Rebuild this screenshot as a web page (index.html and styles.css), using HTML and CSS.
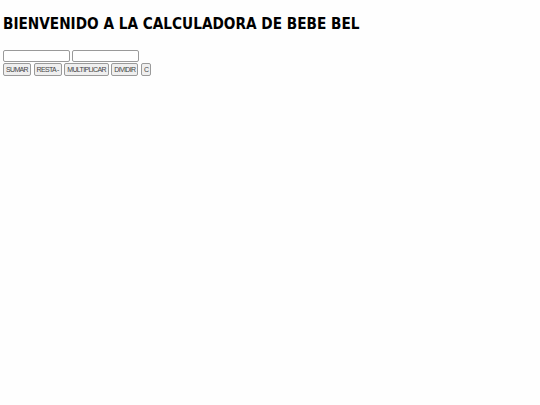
FILE: index.html
```html
<!DOCTYPE html>
<html lang="es">
<head>
<meta charset="utf-8">
<title>Calculadora</title>
<link rel="stylesheet" href="styles.css">
</head>
<body>
<h1 class="title">BIENVENIDO A LA CALCULADORA DE BEBE BEL</h1>
<div class="inputs">
  <input class="field" type="text">
  <input class="field" type="text">
</div>
<div class="buttons">
  <button class="btn">SUMAR</button>
  <button class="btn">RESTA -</button>
  <button class="btn">MULTIPLICAR</button>
  <button class="btn">DIVIDIR</button>
  <button class="btn">C</button>
</div>
</body>
</html>
```
FILE: styles.css
```css
html, body {
  background: #fefefe;
}
body {
  margin: 0;
  padding: 3px;
  font-family: "Liberation Sans", Arial, sans-serif;
}
.title {
  margin: 11.5px 0 17.5px 0;
  font-family: "DejaVu Sans Condensed", "DejaVu Sans", sans-serif;
  font-weight: bold;
  font-size: 15.2px;
  line-height: 18px;
  color: #000;
  white-space: nowrap;
}
.inputs {
  display: flex;
  gap: 2px;
  height: 13px;
}
.field {
  width: 67px;
  height: 12px;
  box-sizing: border-box;
  margin: 0;
  padding: 0 2px;
  border: 1px solid #9a9a9a;
  border-radius: 2px;
  background: #fff;
  font-size: 7px;
}
.buttons {
  display: flex;
  gap: 2.5px;
}
.btn {
  height: 13px;
  margin: 0;
  padding: 0 2px;
  border: 1px solid #9a9a9a;
  border-radius: 2px;
  background: #efefef;
  font-family: "Liberation Sans", Arial, sans-serif;
  font-size: 7px;
  letter-spacing: -0.65px;
  line-height: 11px;
  color: #444;
}
```
